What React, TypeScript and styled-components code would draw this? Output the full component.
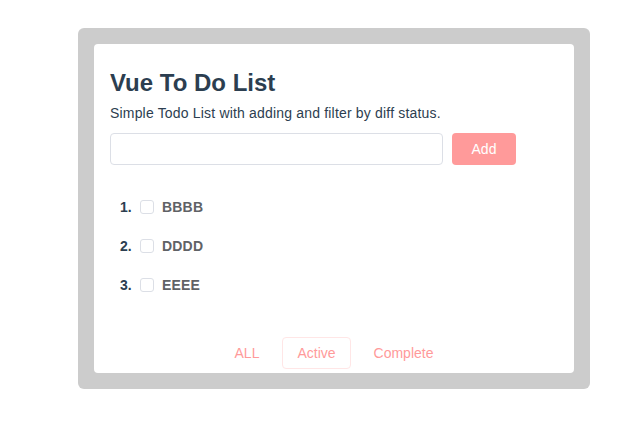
import React, { useState } from "react";
import styled, { createGlobalStyle } from "styled-components";

const Global = createGlobalStyle`
  html, body { margin: 0; padding: 0; background: #fff; }
  body { font-family: "Liberation Sans", Arial, sans-serif; }
  * { box-sizing: border-box; }
`;

const Page = styled.div`
  padding: 28px 0 0 78px;
`;

const Frame = styled.div`
  width: 512px;
  padding: 16px;
  background: #cccccc;
  border-radius: 6px;
`;

const Card = styled.div`
  background: #ffffff;
  border-radius: 4px;
  padding: 25px 16px 4px;
  display: flex;
  flex-direction: column;
`;

const Title = styled.h1`
  margin: 0 0 8px;
  font-size: 24px;
  line-height: 28px;
  font-weight: 700;
  color: #2c3e50;
`;

const Subtitle = styled.p`
  margin: 0 0 12px;
  font-size: 14px;
  line-height: 16px;
  letter-spacing: 0.18px;
  color: #2c3e50;
`;

const InputRow = styled.div`
  display: flex;
  gap: 9px;
  align-items: center;
`;

const TextInput = styled.input`
  width: 333px;
  height: 32px;
  border: 1px solid #dcdfe6;
  border-radius: 4px;
  padding: 0 12px;
  font-family: inherit;
  font-size: 14px;
  color: #606266;
  outline: none;
`;

const AddButton = styled.button`
  width: 64px;
  height: 32px;
  border: none;
  border-radius: 4px;
  background: #ff9a9a;
  color: #ffffff;
  font-family: inherit;
  font-size: 14px;
  padding: 0;
  cursor: pointer;
`;

const List = styled.ol`
  list-style: none;
  margin: 22px 0 0;
  padding: 0 0 0 10px;
`;

const Item = styled.li`
  display: flex;
  align-items: center;
  height: 39px;
  font-size: 14px;
  font-weight: 700;
`;

const Num = styled.span`
  color: #2c3e50;
  width: 20px;
`;

const Box = styled.span`
  width: 14px;
  height: 14px;
  border: 1px solid #dcdfe6;
  border-radius: 3px;
  background: #fff;
  margin-right: 8px;
`;

const Label = styled.span`
  color: #606266;
  letter-spacing: 0.2px;
`;

const Footer = styled.div`
  display: flex;
  justify-content: center;
  gap: 8px;
  margin-top: 33px;
`;

const FilterButton = styled.button<{ $active?: boolean }>`
  height: 32px;
  padding: 0 14px;
  border: 1px solid ${(p) => (p.$active ? "#ffe6e6" : "transparent")};
  border-radius: 4px;
  background: #fff;
  color: #ff9a9a;
  font-family: inherit;
  font-size: 14px;
  cursor: pointer;
`;

const todos = ["BBBB", "DDDD", "EEEE"];
const filters = ["ALL", "Active", "Complete"];

export default function App() {
  const [filter, setFilter] = useState("Active");
  return (
    <Page>
      <Global />
      <Frame>
        <Card>
          <Title>Vue To Do List</Title>
          <Subtitle>Simple Todo List with adding and filter by diff status.</Subtitle>
          <InputRow>
            <TextInput />
            <AddButton>Add</AddButton>
          </InputRow>
          <List>
            {todos.map((t, i) => (
              <Item key={t}>
                <Num>{i + 1}.</Num>
                <Box />
                <Label>{t}</Label>
              </Item>
            ))}
          </List>
          <Footer>
            {filters.map((f) => (
              <FilterButton key={f} $active={f === filter} onClick={() => setFilter(f)}>
                {f}
              </FilterButton>
            ))}
          </Footer>
        </Card>
      </Frame>
    </Page>
  );
}
